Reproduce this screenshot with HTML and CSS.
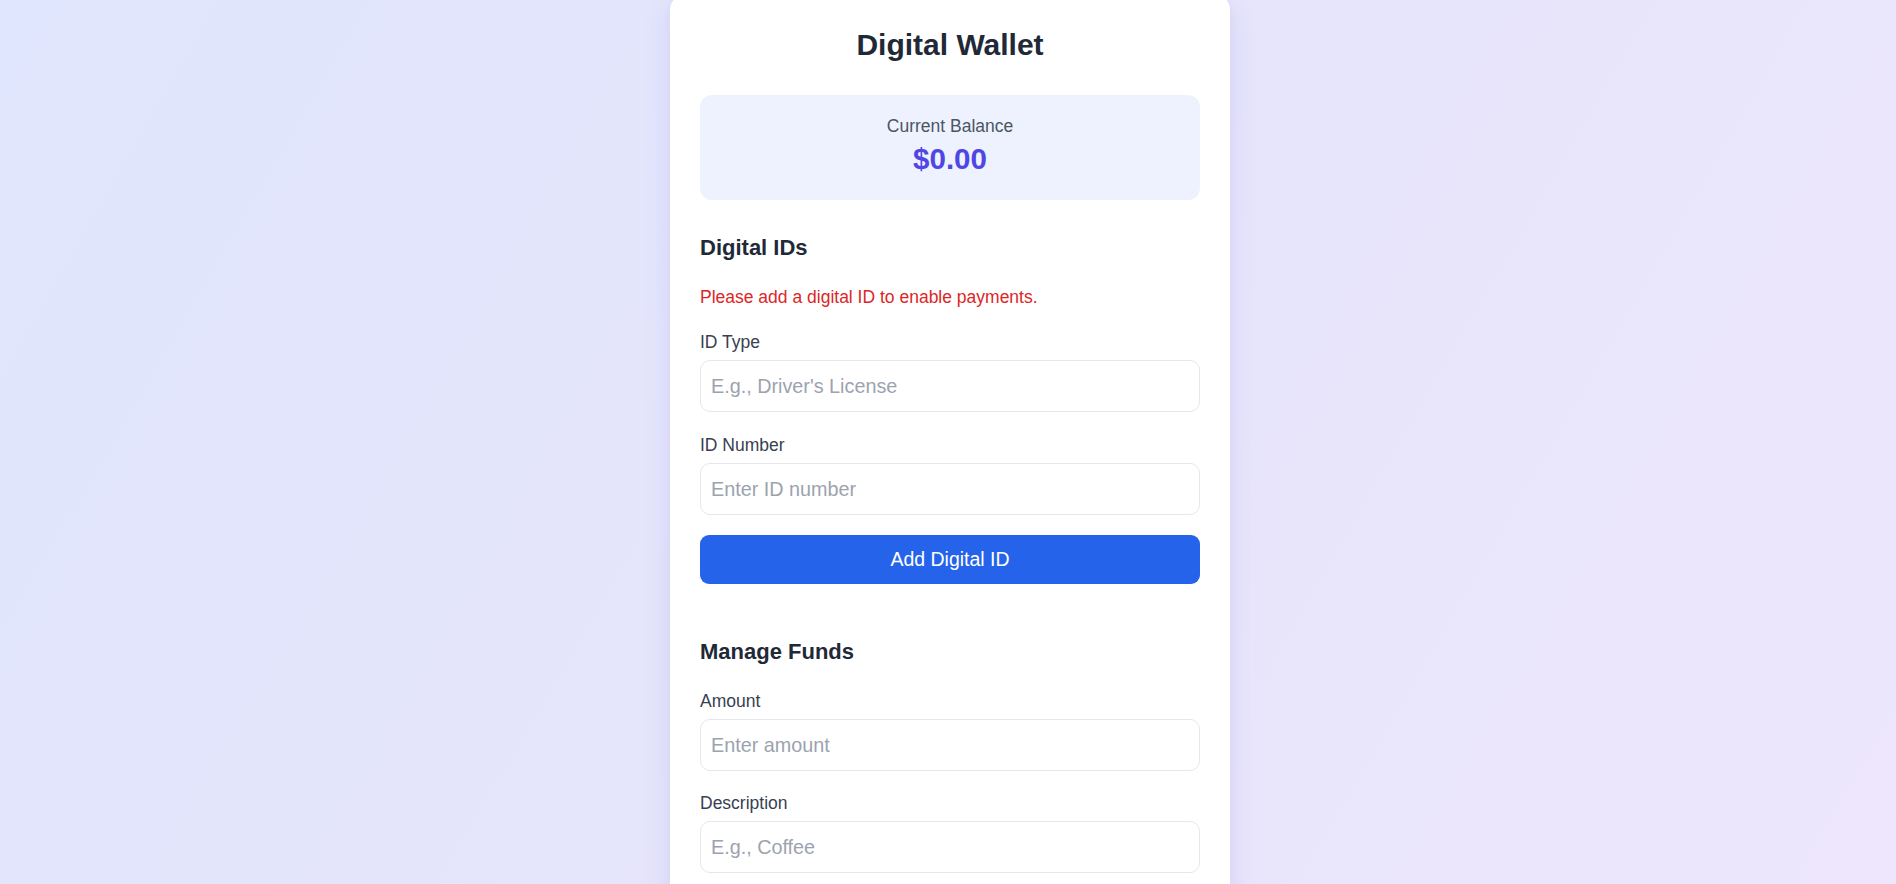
FILE: index.html
```html
<!DOCTYPE html>
<html lang="en">
<head>
<meta charset="utf-8">
<title>Digital Wallet</title>
<link rel="stylesheet" href="styles.css">
</head>
<body>
<main class="page">
  <section class="card">
    <h1 class="title">Digital Wallet</h1>
    <div class="balance">
      <p class="balance-label">Current Balance</p>
      <p class="balance-value">$0.00</p>
    </div>

    <div class="section">
      <h2 class="section-title">Digital IDs</h2>
      <p class="warning">Please add a digital ID to enable payments.</p>
      <div class="field">
        <label class="label" for="idType">ID Type</label>
        <input class="input" id="idType" type="text" placeholder="E.g., Driver's License">
      </div>
      <div class="field">
        <label class="label" for="idNumber">ID Number</label>
        <input class="input" id="idNumber" type="text" placeholder="Enter ID number">
      </div>
      <button class="btn" type="button">Add Digital ID</button>
    </div>

    <div class="section section-funds">
      <h2 class="section-title">Manage Funds</h2>
      <div class="field">
        <label class="label" for="amount">Amount</label>
        <input class="input" id="amount" type="text" placeholder="Enter amount">
      </div>
      <div class="field">
        <label class="label" for="desc">Description</label>
        <input class="input" id="desc" type="text" placeholder="E.g., Coffee">
      </div>
    </div>
  </section>
</main>
</body>
</html>
```
FILE: styles.css
```css
* { box-sizing: border-box; }
html, body { margin: 0; padding: 0; }
body {
  min-height: 884px;
  background: linear-gradient(120deg, #e0e6fd 0%, #e6e5fb 50%, #ede6fc 100%);
  font-family: "Liberation Sans", Arial, sans-serif;
  color: #1f2937;
  overflow: hidden;
}
.page {
  display: flex;
  justify-content: center;
  padding-left: 4px;
}
.card {
  width: 560px;
  margin-top: -6px;
  background: #ffffff;
  border-radius: 16px;
  box-shadow: 0 10px 30px rgba(79, 70, 229, 0.10), 0 4px 10px rgba(0, 0, 0, 0.04);
  padding: 33px 30px 40px;
  display: flex;
  flex-direction: column;
}
.title {
  margin: 0;
  font-size: 30px;
  line-height: 36px;
  font-weight: 700;
  text-align: center;
  color: #1f2937;
}
.balance {
  margin-top: 32px;
  background: #eef2ff;
  border-radius: 12px;
  padding: 18px 16px 23px;
  text-align: center;
}
.balance-label {
  margin: 0;
  font-size: 17.5px;
  line-height: 26px;
  color: #4b5563;
}
.balance-value {
  margin: 2px 0 0;
  font-size: 29.5px;
  line-height: 36px;
  font-weight: 700;
  color: #4f46e5;
}
.section {
  margin-top: 33px;
  display: flex;
  flex-direction: column;
}
.section-funds { margin-top: 53px; }
.section-title {
  margin: 0;
  font-size: 22px;
  line-height: 30px;
  font-weight: 700;
  color: #1f2937;
}
.warning {
  margin: 22px 0 0;
  font-size: 17.5px;
  line-height: 24px;
  color: #dc2626;
}
.field {
  display: flex;
  flex-direction: column;
  margin-top: 21px;
}
.section-funds .field { margin-top: 20px; }
.section-funds .field:first-of-type { margin-top: 22px; }
.label {
  font-size: 17.5px;
  line-height: 24px;
  color: #374151;
  margin-bottom: 6px;
}
.input {
  height: 52px;
  width: 100%;
  border: 1px solid #e5e7eb;
  border-radius: 10px;
  padding: 0 10px;
  font-family: "Liberation Sans", Arial, sans-serif;
  font-size: 19.8px;
  color: #1f2937;
  background: #ffffff;
  outline: none;
}
.input::placeholder { color: #9ca3af; }
.btn {
  margin-top: 20px;
  height: 49px;
  width: 100%;
  border: none;
  border-radius: 9px;
  background: #2563eb;
  color: #ffffff;
  font-family: "Liberation Sans", Arial, sans-serif;
  font-size: 19.5px;
  cursor: pointer;
}
```
